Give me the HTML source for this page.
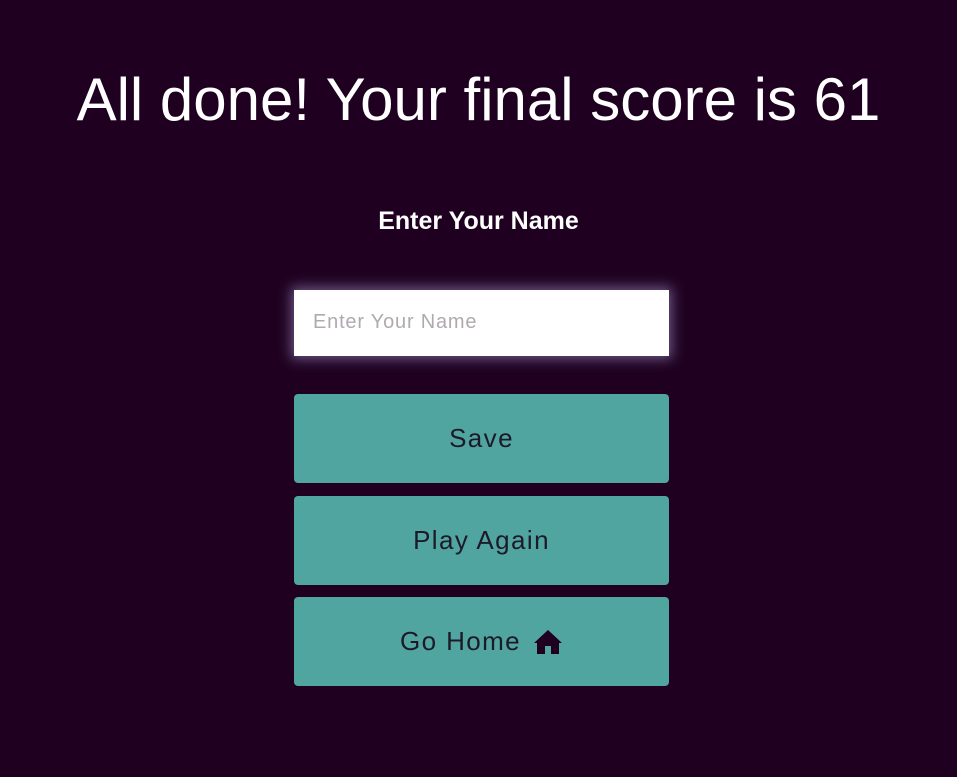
<!DOCTYPE html>
<html><head><meta charset="utf-8"><style>
html,body{margin:0;padding:0;background:#1f0020;width:957px;height:777px;overflow:hidden;font-family:"Liberation Sans",sans-serif}
h1{position:absolute;top:63px;left:0;width:957px;text-align:center;margin:0;color:#fff;font-weight:400;font-size:60px;line-height:74px}
.lbl{position:absolute;top:205px;left:0;width:957px;text-align:center;color:#fff;font-size:25px;font-weight:bold;line-height:32px}
.inp{position:absolute;left:294px;top:290px;width:375px;height:66px;background:#fff;box-shadow:0 0 12px 3px rgba(200,190,255,.45)}
.inp span{position:absolute;left:19px;top:21px;font-size:20px;color:#b0aab0;letter-spacing:0.8px}
.btn{position:absolute;left:294px;width:375px;height:89px;background:#50a5a1;border-radius:4px;color:#1d1a28;font-size:26px;letter-spacing:1.4px;display:flex;align-items:center;justify-content:center}
</style></head><body>
<h1>All done! Your final score is 61</h1>
<div class="lbl">Enter Your Name</div>
<div class="inp"><span>Enter Your Name</span></div>
<div class="btn" style="top:394px">Save</div>
<div class="btn" style="top:496px">Play Again</div>
<div class="btn" style="top:597px">Go Home<svg width="30" height="26" viewBox="0 0 30 26" style="margin-left:12px"><path d="M15 1 L29 14 L26 14 L26 25 L18 25 L18 17 L12 17 L12 25 L4 25 L4 14 L1 14 Z" fill="#1f0020"/></svg></div>
</body></html>
